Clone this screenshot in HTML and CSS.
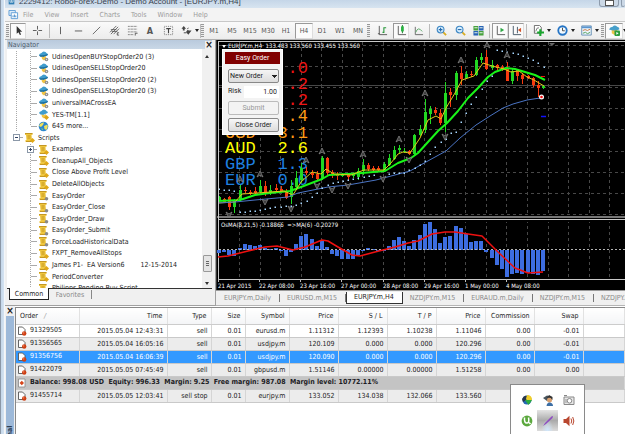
FILE: index.html
```html
<!DOCTYPE html>
<html lang="en">
<head>
<meta charset="utf-8">
<title>RoboForex-Demo - EURJPY.m,H4</title>
<link rel="stylesheet" href="styles.css">
</head>
<body>
<svg class="defs" aria-hidden="true">
  <symbol id="ea" viewBox="0 0 11 11"><path d="M1 4Q1.500 2.500 3.500 2Q5-.5 7.500 1L9 2.500Q10.500 3 9.500 4L5 6Q2 6 1 4Z" fill="#3f9ccd"/><path d="M1 4Q5 5 9.500 3L10 4Q6 7 2 5.500Z" fill="#1d6f9f"/><path d="M3.500 5.500Q6 6.500 8 5V8L6 9.500L4 8Z" fill="#f1c445"/><circle cx="8.500" cy="8.500" r="1.800" fill="#8c8c8c"/><circle cx="8.500" cy="8.500" r=".7" fill="#ddd"/></symbol>
  <symbol id="ea2" viewBox="0 0 11 11"><path d="M1 4Q1.500 2.500 3.500 2Q5-.5 7.500 1L9 2.500Q10.500 3 9.500 4L5 6Q2 6 1 4Z" fill="#3f9ccd"/><path d="M3.500 5.500Q6 6.500 8 5V8L6 9.500L4 8Z" fill="#f1c445"/><path d="M8.500 6L11 8.500L8.500 11L6 8.500Z" fill="#dca416"/></symbol>
  <symbol id="globe" viewBox="0 0 11 11"><circle cx="5.500" cy="5.500" r="4.800" fill="#2a86d1"/><path d="M2 3Q4 1 6 1.500L5 4L3 6L1 5ZM6 5L9.500 3.500Q10.500 6 8.500 9L6.500 8Z" fill="#f0e05a"/><path d="M3 7L5 8L4.500 9.500Z" fill="#8bd06b"/></symbol>
  <symbol id="script" viewBox="0 0 11 11"><path d="M1 1H8.500V3H7.500L8 8H9V10H1.500V8H2.500L2 3H1Z" fill="#efc63f"/><path d="M1 1.500H8.500M2 9.500H8M3.500 4H6.500M3.500 6H6.500" stroke="#b98c1c" stroke-width=".8"/><circle cx="8.500" cy="8.700" r="1.800" fill="#8a8a8a"/></symbol>
  <symbol id="script2" viewBox="0 0 11 11"><path d="M1 1H8.500V3H7.500L8 8H9V10H1.500V8H2.500L2 3H1Z" fill="#efc63f"/><path d="M1 1.500H8.500M2 9.500H8M3.500 4H6.500M3.500 6H6.500" stroke="#b98c1c" stroke-width=".8"/><path d="M8.500 6L11 8.500L8.500 11L6 8.500Z" fill="#e0a818"/></symbol>
  <symbol id="order" viewBox="0 0 10 10"><path d="M1.500 1H5.500L8 3.500V8.500H1.500Z" fill="#fff" stroke="#555" stroke-width=".9"/><circle cx="7.200" cy="7.500" r="2.200" fill="#cf3d12"/><circle cx="6.700" cy="6.900" r=".7" fill="#f59a70"/></symbol>
  <symbol id="balance" viewBox="0 0 10 10"><path d="M1.500 1H8V9H1.500Z" fill="#fff" stroke="#888" stroke-width=".8"/><path d="M4.800 2.800L7 5L4.800 7.200L2.600 5Z" fill="#d6451a"/></symbol>
</svg>

<header class="titlebar">
  <svg class="app-icon" viewBox="0 0 9 8"><path d="M0 0H9V7H0Z" fill="#2f7eb5"/><path d="M2 0V3.500H7V0M4.500 0V3" stroke="#fff" fill="none"/></svg>
  <span class="title">2229412: RoboForex-Demo - Demo Account - [EURJPY.m,H4]</span>
  <button class="winbtn" aria-label="Minimize"></button><button class="winbtn last" aria-label="Maximize"></button>
</header>

<nav class="menu">
  <svg class="menu-icon" viewBox="0 0 11 11"><path d="M.5.5H7.500V6H.5Z" fill="#dcecf9" stroke="#5b9bd5"/><path d="M3 3H10V9.500H3Z" fill="#fff" stroke="#5b9bd5"/><path d="M5 8V6M6.500 8V5M8 8V6" stroke="#3d85c6"/></svg>
  <a href="#">File</a><a href="#">View</a><a href="#">Insert</a><a href="#">Charts</a><a href="#">Tools</a><a href="#">Window</a><a href="#">Help</a>
</nav>

<div class="toolbar">
  <i class="grip"></i>
  <button class="on w16" aria-label="Cursor"><svg viewBox="0 0 12 12"><path d="M4 1V9.500L6 8L7.500 11L8.800 10.400L7.500 7.400H10Z" fill="#333"/></svg></button>
  <button class="w22" aria-label="Crosshair"><svg viewBox="0 0 12 12"><path d="M6 1V5M6 7V11M1 6H5M7 6H11" stroke="#555"/></svg></button>
  <i class="sep"></i>
  <button class="w18" aria-label="Vertical line"><svg viewBox="0 0 12 12"><path d="M6 2V10" stroke="#555"/></svg></button>
  <button class="w18" aria-label="Horizontal line"><svg viewBox="0 0 12 12"><path d="M2 6.500H10" stroke="#555"/></svg></button>
  <button class="w18" aria-label="Trendline"><svg viewBox="0 0 12 12"><path d="M2 10L10 2" stroke="#666"/></svg></button>
  <button class="w18" aria-label="Channel"><svg viewBox="0 0 12 12"><path d="M1 8L8 1M2 10L10 2M5 10L11 4M2 5H8M3 7H9" stroke="#555" stroke-width=".9"/><path d="M11 8.500H9V11H11" stroke="#333" fill="none" stroke-width=".8"/></svg></button>
  <button class="w18" aria-label="Fibonacci"><svg viewBox="0 0 12 12"><path d="M1 1.500H11M1 4.500H11M1 7.500H11M1 10.500H7" stroke="#666" stroke-dasharray="1 .6"/><path d="M9 11.500V9H11.500" stroke="#333" fill="none" stroke-width=".8"/></svg></button>
  <button class="w18 glyph">A</button>
  <button class="w18" aria-label="Text label"><svg viewBox="0 0 12 12"><path d="M1.500 1.500H10.500V10.500H1.500Z" fill="none" stroke="#777" stroke-dasharray="1 1"/><path d="M3.500 4H8.500M6 4V9" stroke="#444" stroke-width="1.200"/></svg></button>
  <button class="w18" aria-label="Arrows"><svg viewBox="0 0 12 12"><path d="M3 1L5.500 4H4V6H2V4H.5ZM8 10.500L5.500 7.500L7 5.500L9 6H11.500Z" fill="#444"/><path d="M3 8.500H6M7 4.500L8 3" stroke="#444"/></svg></button>
  <i class="caret near"></i>
  <i class="sep flush"></i><i class="grip"></i>
  <button class="w18">M1</button><button class="w18">M5</button><button class="w18">M15</button><button class="w18">M30</button><button class="w18">H1</button><button class="w18 on">H4</button><button class="w18">D1</button><button class="w18">W1</button><button class="w18">MN</button>
  <i class="grip"></i>
  <button class="w22" aria-label="Bar chart"><svg viewBox="0 0 12 12"><path d="M2.500 1V10.500H11M1 9.500H3" stroke="#555" fill="none"/><path d="M6 8H7.500V3H10" stroke="#29983b" fill="none" stroke-width="1.200"/></svg></button>
  <button class="w16 on" aria-label="Candlesticks"><svg viewBox="0 0 12 12"><path d="M2.500 1V10.500H11" stroke="#555" fill="none"/><path d="M7 0V9" stroke="#18772a"/><path d="M5.500 1.500H8.500V7H5.500Z" fill="#27b23f"/></svg></button>
  <button class="w18" aria-label="Line chart"><svg viewBox="0 0 12 12"><path d="M2.500 2V10.500H11" stroke="#666" fill="none"/><path d="M3 8Q5.500 1 10 7" stroke="#58a866" fill="none"/></svg></button>
  <i class="sep wide"></i>
  <button class="w19" aria-label="Zoom in"><svg viewBox="0 0 12 12"><path d="M7.500 7.500L11 11" stroke="#d8ac22" stroke-width="2"/><circle cx="5" cy="5" r="3.700" fill="#d7efff" stroke="#3e87c4" stroke-width="1.200"/><path d="M3 5H7M5 3V7" stroke="#2869a8" stroke-width="1.200"/></svg></button>
  <button class="w18" aria-label="Zoom out"><svg viewBox="0 0 12 12"><path d="M7.500 7.500L11 11" stroke="#d8ac22" stroke-width="2"/><circle cx="5" cy="5" r="3.700" fill="#d7efff" stroke="#3e87c4" stroke-width="1.200"/><path d="M3 5H7" stroke="#2869a8" stroke-width="1.200"/></svg></button>
  <button class="w18" aria-label="Tile windows"><svg viewBox="0 0 12 12"><path d="M.5 1H5.700V6H.5ZM6.300 6.500H11.500V11.500H6.300Z" fill="#47a03c"/><path d="M6.300 1H11.500V6H6.300ZM.5 6.500H5.700V11.500H.5Z" fill="#2763b5"/><path d="M1.500 3H5M7 3H10.500M1.500 8.500H5M7 8.500H10.500" stroke="#e4f2e8" stroke-width="1.200"/></svg></button>
  <i class="sep wide"></i>
  <button class="w16 on" aria-label="Auto scroll"><svg viewBox="0 0 12 12"><path d="M2.500 1V10.500H11" stroke="#555" fill="none"/><path d="M6 3L10 5.500L6 8Z" fill="#2ea744"/></svg></button>
  <button class="w16 on" aria-label="Chart shift"><svg viewBox="0 0 12 12"><path d="M2.500 1V10.500H11M7 2V9" stroke="#456" fill="none"/><path d="M11 3L7.500 5.500L11 8Z" fill="#d3532a"/></svg></button>
  <i class="sep wide"></i>
  <button class="w18" aria-label="Indicators"><svg viewBox="0 0 12 12"><path d="M1.500.5H7L9 2.500V9H1.500Z" fill="#fff" stroke="#666"/><path d="M3 7Q4 2 6.500 3" stroke="#777" fill="none"/><path d="M8 4.500V12M4.500 8.200H12" stroke="#18a52e" stroke-width="2.300"/></svg></button><i class="caret"></i>
  <button class="w18" aria-label="Periods"><svg viewBox="0 0 12 12"><circle cx="6" cy="6" r="4.600" fill="#f3faff" stroke="#2474c5" stroke-width="2"/><path d="M6 3V6.300H8.500" stroke="#444" fill="none"/></svg></button><i class="caret"></i>
  <button class="w18" aria-label="Templates"><svg viewBox="0 0 12 12"><path d="M.8 1H11.200V11H.8Z" fill="#edf5fc" stroke="#668eb5"/><path d="M1 2.500H11" stroke="#5b95cf" stroke-width="2"/><path d="M2 6L4.500 5L7 6L10 4.500" stroke="#c67742" fill="none"/><path d="M2 9L5 8L7 9.500L10 8" stroke="#4b9c55" fill="none"/></svg></button><i class="caret"></i>
  <i class="grip"></i>
  <button class="w18 on" aria-label="Expert advisors"><svg viewBox="0 0 12 12"><path d="M3 4H9V9L6 11L3 9Z" fill="#efc64a"/><path d="M0 5Q1 2 4 2Q6-1 9 2Q12 3 11 5Q6 7 0 5Z" fill="#469fca"/><rect x="6" y="6" width="6" height="6" rx="1" fill="#2b9e3d"/><path d="M8 7.500V10.500L10.500 9Z" fill="#fff"/></svg></button><i class="caret"></i>
</div>

<main class="work">
  <section class="navigator">
    <div class="nav-head"><span>Navigator</span><button class="close" aria-label="Close navigator">×</button></div>
    <div class="nav-body">
      <ul class="tree">
        <li class="ea"><svg><use href="#ea"/></svg>UdinesOpenBUYStopOrder20 (3)</li>
        <li class="ea"><svg><use href="#ea"/></svg>UdinesOpenSELLStopOrder20</li>
        <li class="ea"><svg><use href="#ea"/></svg>UdinesOpenSELLStopOrder20 (2)</li>
        <li class="ea"><svg><use href="#ea"/></svg>UdinesOpenSELLStopOrder20 (3)</li>
        <li class="ea"><svg><use href="#ea"/></svg>universalMACrossEA</li>
        <li class="ea"><svg><use href="#ea2"/></svg>YES-TM[1.1]</li>
        <li class="ea end"><svg><use href="#globe"/></svg>645 more...</li>
        <li class="root"><b class="box"></b><svg><use href="#script2"/></svg>Scripts</li>
        <li><b class="box plus"></b><svg><use href="#script2"/></svg>Examples</li>
        <li><svg><use href="#script2"/></svg>CleanupAll_Objects</li>
        <li><svg><use href="#script2"/></svg>Close Above Profit Level</li>
        <li><svg><use href="#script2"/></svg>DeleteAllObjects</li>
        <li><svg><use href="#script"/></svg>EasyOrder</li>
        <li><svg><use href="#script"/></svg>EasyOrder_Close</li>
        <li><svg><use href="#script"/></svg>EasyOrder_Draw</li>
        <li><svg><use href="#script"/></svg>EasyOrder_Submit</li>
        <li><svg><use href="#script"/></svg>ForceLoadHistoricalData</li>
        <li><svg><use href="#script2"/></svg>FXPT_RemoveAllStops</li>
        <li><svg><use href="#script2"/></svg>James P1-&nbsp; EA Version6<span class="date">12-15-2014</span></li>
        <li><svg><use href="#script2"/></svg>PeriodConverter</li>
        <li><svg><use href="#script2"/></svg>Philipps Pending Buy Script</li>
      </ul>
      <div class="scroll"><i class="up"></i><i class="thumb"></i><i class="down"></i></div>
    </div>
    <div class="nav-tabs"><button class="active">Common</button><button>Favorites</button></div>
  </section>

  <section class="charts">
    <div class="chart">
      <svg id="plot" class="plot"></svg>
      <form class="easy">
        <h2>Easy Order</h2>
        <select aria-label="Order type"><option>New Order</option></select>
        <div class="risk"><label for="risk">Risk</label><input id="risk" value="1.00"></div>
        <button type="button" disabled>Submit</button>
        <button type="button">Close Order</button>
      </form>
    </div>
    <div class="chart-tabs"><button>EURJPY.m,Daily</button><button>EURUSD.m,M15</button><button class="active">EURJPY.m,H4</button><button>NZDJPY.m,M15</button><button>EURAUD.m,Daily</button><button>NZDJPY.m,M15</button><button>NZDJPY.m,H4</button></div>
  </section>
</main>

<section class="terminal">
  <div class="side"><button class="close" aria-label="Close terminal">×</button><span>Terminal</span></div>
  <div class="orders">
    <table>
      <colgroup><col class="c64"><col class="c88"><col class="c44"><col class="c34"><col class="c44"><col class="c49"><col class="c49"><col class="c49"><col class="c49"><col class="c49"><col class="c49"><col></colgroup>
      <thead><tr><th>Order <i class="sort">/</i></th><th>Time</th><th>Type</th><th>Size</th><th>Symbol</th><th>Price</th><th>S / L</th><th>T / P</th><th>Price</th><th>Commission</th><th>Swap</th><th></th></tr></thead>
      <tbody>
        <tr><td><svg><use href="#order"/></svg>91329505</td><td>2015.05.04 12:43:31</td><td>sell</td><td>0.01</td><td>eurusd.m</td><td>1.11312</td><td>1.12393</td><td>1.10238</td><td>1.11046</td><td>0.00</td><td>-0.01</td><td></td></tr>
        <tr class="alt"><td><svg><use href="#order"/></svg>91356565</td><td>2015.05.04 16:05:16</td><td>sell</td><td>0.01</td><td>usdjpy.m</td><td>120.109</td><td>0.000</td><td>0.000</td><td>120.296</td><td>0.00</td><td>-0.01</td><td></td></tr>
        <tr class="sel"><td><svg><use href="#order"/></svg>91356756</td><td>2015.05.04 16:06:39</td><td>sell</td><td>0.01</td><td>usdjpy.m</td><td>120.090</td><td>0.000</td><td>0.000</td><td>120.296</td><td>0.00</td><td>-0.01</td><td></td></tr>
        <tr class="alt"><td><svg><use href="#order"/></svg>91422079</td><td>2015.05.05 07:45:49</td><td>sell</td><td>0.01</td><td>gbpusd.m</td><td>1.51146</td><td>0.00000</td><td>0.00000</td><td>1.51258</td><td>0.00</td><td>0.00</td><td></td></tr>
        <tr class="sum"><td colspan="12"><svg><use href="#balance"/></svg>Balance: 998.08 USD&nbsp; Equity: 996.33&nbsp; Margin: 9.25&nbsp; Free margin: 987.08&nbsp; Margin level: 10772.11%</td></tr>
        <tr class="alt"><td><svg><use href="#order"/></svg>91455714</td><td>2015.05.05 12:03:41</td><td>sell stop</td><td>0.01</td><td>eurjpy.m</td><td>133.052</td><td>134.038</td><td>132.066</td><td>133.560</td><td></td><td></td><td></td></tr>
      </tbody>
    </table>
  </div>
</section>

<aside class="tray">
  <button aria-label="Download manager"><svg viewBox="0 0 12 12"><circle cx="6" cy="6" r="4.500" fill="#2468b4"/><path d="M1 5Q3 1 6 2L5 6L2 8Z" fill="#28364a"/><path d="M6 1Q11 1 11 6L7 7L5 5Z" fill="#f0cf2b"/><path d="M4 6H11L7.500 11Z" fill="#2dac3d"/></svg></button>
  <button aria-label="Agent"><svg viewBox="0 0 12 12"><path d="M1 4L5 1.500L10 3V6L5 7Z" fill="#48545c"/><circle cx="7.500" cy="6" r="2.500" fill="#d9a06f"/><path d="M4.500 12Q5 8 8 8.500Q11 9 11 12Z" fill="#3d6fa5"/><path d="M4.500 4.500Q8 2 10.500 6V3L7 1Z" fill="#333"/></svg></button>
  <button aria-label="Capture"><svg viewBox="0 0 12 12"><path d="M1 3H11V10.500H1Z" fill="#e8e8e8" stroke="#888"/><path d="M1 1.500H4" stroke="#888"/><circle cx="6.500" cy="6.800" r="2.300" fill="#fff" stroke="#888"/><path d="M3 5V9" stroke="#999"/></svg></button>
  <button aria-label="Torrent"><svg viewBox="0 0 12 12"><circle cx="6" cy="6" r="5.400" fill="#5ba83e"/><path d="M3.500 2.500Q3 8.500 6.200 8Q8.500 7.500 7.500 2.500M8 7.500L9.500 9" stroke="#fff" fill="none" stroke-width="1.500"/></svg></button>
  <button class="hot" aria-label="Pen"><svg viewBox="0 0 12 12"><path d="M1 11L3 8L9.500 1.500L11 1L10.500 3L4 9Z" fill="#8e4cc0"/></svg></button>
  <button aria-label="Volume"><svg viewBox="0 0 12 12"><path d="M.5 4H3L6.500.8V11.200L3 8H.5Z" fill="#b9472f"/><path d="M8 3.500Q9.500 6 8 8.500M9.700 2Q12 6 9.700 10" stroke="#b9472f" fill="none"/></svg></button>
</aside>
<script src="chart.js"></script>
</body>
</html>
```
FILE: styles.css
```css
* { box-sizing: border-box; }
body {
  margin: 0; height: 100vh; overflow: hidden; position: relative;
  display: flex; flex-direction: column;
  padding-left: 5px;
  font: 7px/10px "DejaVu Sans Condensed", "DejaVu Sans", sans-serif;
  color: #1c1c24; background: #f0f0f0;
}
body::before {
  content: ""; position: absolute; left: 0; top: 0; bottom: 0; width: 5px;
  background: linear-gradient(90deg, #8b97a6 1px, #c4d7ea 1px, #d5e3f1 4px, #f4f7fa 4px);
}
button, input, select { font: inherit; color: inherit; margin: 0; padding: 0; border: 0; background: none; border-radius: 0; }
svg { display: block; flex: none; }
.defs { position: absolute; width: 0; height: 0; }
.close { font-size: 10px; font-weight: bold; line-height: 8px; color: #222; }

.titlebar { display: flex; height: 8px; flex: none; padding-left: 2px; gap: 3px; background: linear-gradient(#c5d6e8, #d7e4f0); }
.app-icon { width: 9px; height: 5px; }
.title { flex: 1; font: 8px/10px "Liberation Sans", sans-serif; margin-top: -3px; white-space: nowrap; color: #39424e; }
.winbtn { width: 20px; height: 7px; border: 1px solid #8e9cad; border-top: 0; border-radius: 0 0 3px 3px; display: flex; justify-content: center; background: #cbd8e6; }
.winbtn::after { content: ""; width: 7px; height: 4px; border: 1px solid #555; background: #fff; }
.winbtn.last { width: 4px; margin-left: -1px; overflow: hidden; border-right: 0; }
.winbtn.last::after { display: none; }

.menu { display: flex; flex: none; align-items: center; height: 14px; padding-left: 3px; gap: 11px; background: #f3f3f3; border-bottom: 1px solid #c8c8c8; }
.menu-icon { width: 11px; height: 10px; margin-right: -7px; }
.menu a { color: #9b9b9b; text-decoration: none; font-size: 7px; }

.toolbar { display: flex; flex: none; align-items: center; height: 18px; padding: 1px 0 1px 1px; background: linear-gradient(#fafafa, #ececec); border-bottom: 1px solid #b0b0b0; overflow: hidden; white-space: nowrap; color: #555; }
.toolbar button { height: 16px; flex: none; display: flex; align-items: center; justify-content: center; border: 1px solid transparent; }
.toolbar svg { width: 11px; height: 11px; }
.toolbar .on { background: #fbfbfb; border-color: #999 #ddd #ddd #999; }
.toolbar .glyph { font-size: 9px; font-weight: bold; }
.w16 { width: 16px; } .w18 { width: 18px; } .w19 { width: 19px; } .w22 { width: 22px; }
.grip { flex: none; width: 3px; height: 13px; margin-right: 1px; background: repeating-linear-gradient(#999 0 1px, #eee 1px 2px); }
.sep { flex: none; width: 1px; height: 14px; margin: 0 1px; background: #bbb; }
.sep.flush { margin: 0; }
.sep.wide { margin: 0 2px; }
.caret { flex: none; width: 4px; margin-right: 2px; border: 2px solid transparent; border-top: 3px solid #222; border-bottom: 0; }
.caret.near { margin-right: 1px; }

.work { display: flex; flex: none; height: 266px; }
.navigator { width: 211px; flex: none; display: flex; flex-direction: column; padding: 0 3px 3px 2px; border-right: 1px solid #a0a0a0; border-bottom: 1px solid #a0a0a0; background: #f0f0f0; }
.nav-head { display: flex; justify-content: space-between; align-items: center; height: 9px; flex: none; padding: 0 1px; color: #4c5a6c; background: linear-gradient(#b9cadd, #c9d7e6); }
.nav-head .close { background: #f0f0f0; margin-right: -2px; width: 8px; }
.nav-body { display: flex; height: 240px; overflow: hidden; background: #fff; border-bottom: 1px solid #333; }
.tree { flex: 1; margin: 2px 0 0; padding: 0; list-style: none; height: 243px; display: grid; grid-auto-rows: 1fr; }
.tree li { position: relative; display: flex; align-items: center; gap: 3px; padding-left: 31px; white-space: pre;
  background: repeating-linear-gradient(#aaa 0 1px, transparent 1px 2px) 23px 0 / 1px 100% no-repeat, linear-gradient(#aaa, #aaa) 24px 50% / 6px 1px no-repeat; }
.tree li.ea { background: repeating-linear-gradient(#aaa 0 1px, transparent 1px 2px) 23px 0 / 1px 100% no-repeat, linear-gradient(#aaa, #aaa) 24px 50% / 6px 1px no-repeat, repeating-linear-gradient(#aaa 0 1px, transparent 1px 2px) 9px 0 / 1px 100% no-repeat; }
.tree li.end { background-size: 1px 50%, 6px 1px, 1px 100%; }
.tree li.root { padding-left: 17px; background: linear-gradient(#aaa, #aaa) 10px 50% / 6px 1px no-repeat; }
.tree svg { width: 11px; height: 11px; }
.date { margin-left: 13px; }
.box { position: absolute; left: 20px; width: 7px; height: 7px; border: 1px solid #8b98a8; background: linear-gradient(#346, #346) 1px 2px / 3px 1px no-repeat #fff; }
.root .box { left: 6px; }
.box.plus { background: linear-gradient(#346, #346) 1px 2px / 3px 1px no-repeat, linear-gradient(#346, #346) 2px 1px / 1px 3px no-repeat #fff; }
.scroll { width: 10px; flex: none; display: flex; flex-direction: column; align-items: center; background: #f0f0f0; padding: 6px 0 3px; }
.scroll .up { border: 2px solid transparent; border-bottom: 3px solid #333; border-top: 0; }
.scroll .down { border: 2px solid transparent; border-top: 3px solid #333; border-bottom: 0; }
.scroll .thumb { width: 9px; height: 17px; margin: auto 0 10px; border: 1px solid #999; border-radius: 1px; background: linear-gradient(#666, #666) 2px 5px / 3px 1px no-repeat, linear-gradient(#666, #666) 2px 7px / 3px 1px no-repeat, linear-gradient(#666, #666) 2px 9px / 3px 1px no-repeat #e4e4e4; }
.nav-tabs { display: flex; height: 12px; padding-left: 2px; margin-top: -1px; position: relative; }
.nav-tabs button { width: 43px; border-right: 1px solid #888; color: #888; height: 9px; margin-top: 2px; }
.nav-tabs .active { width: 40px; height: 12px; margin-top: 0; background: #fff; border: 1px solid #222; border-top: 0; color: #222; }

.charts { flex: 1; min-width: 0; display: flex; flex-direction: column; }
.chart { position: relative; height: 250px; border-left: 1px solid #333; background: #000; }
.plot { width: 100%; height: 100%; font: 6px "DejaVu Sans Condensed", sans-serif; }
.plot .fx { font: 17px "Liberation Mono", monospace; }
.easy { position: absolute; left: 5px; top: 9px; width: 61px; padding: 2px; display: flex; flex-direction: column; gap: 3px; background: #f3f3f3; border: 1px solid #fff; font: 7px/10px Roboto, sans-serif; }
.easy h2 { margin: 0 0 2px; background: #800000; color: #fff; font: inherit; line-height: 12px; text-align: center; }
.easy select, .easy button { width: 51px; height: 14px; margin-left: 3px; border: 1px solid #888; border-radius: 2px; background: linear-gradient(#f7f7f7, #dcdcdc); text-align: center; white-space: nowrap; }
.easy select { appearance: none; text-align: left; padding-left: 1px; background: conic-gradient(from -45deg at 50% 100%, #222 90deg, transparent 0) 43px 5px / 5px 3px no-repeat, linear-gradient(#f5f5f5, #dcdcdc); background: linear-gradient(#222, #222) 43px 5px / 5px 1px no-repeat, linear-gradient(#222, #222) 44px 6px / 3px 1px no-repeat, linear-gradient(#222, #222) 45px 7px / 1px 1px no-repeat, linear-gradient(#f5f5f5, #dcdcdc); }
.easy button:disabled { color: #999; border-color: #bbb; background: #f3f3f3; }
.risk { display: flex; justify-content: space-between; padding: 0 1px 0 3px; height: 12px; }
.risk input { width: 35px; background: #fff; text-align: right; padding-right: 2px; }
.chart-tabs { flex: none; display: flex; align-items: center; overflow: hidden; height: 16px; padding: 1px 0 2px 1px; color: #8a8a8a; border-top: 1px solid #999; border-bottom: 1px solid #b5b5b5; }
.chart-tabs button { flex: none; height: 8px; padding: 0 8px 0 7px; line-height: 8px; border-right: 1px solid #777; }
.chart-tabs .active { height: 12px; border: 1px solid #333; border-top: 0; background: #fff; color: #222; }

.terminal { flex: 1; min-height: 0; overflow: hidden; display: flex; background: #fff; }
.side { width: 10px; flex: none; display: flex; flex-direction: column; align-items: center; background: #f0f0f0; }
.side .close { height: 10px; flex: none; }
.side span { flex: 1; min-height: 0; overflow: hidden; width: 8px; background: #9db9d9; writing-mode: vertical-rl; transform: rotate(180deg); line-height: 8px; text-indent: -22px; font-weight: bold; color: #27384e; }
.orders { flex: 1; min-width: 0; border-left: 1px solid #888; border-top: 1px solid #888; margin-top: 1px; }
table { width: 100%; table-layout: fixed; border-collapse: collapse; }
.c64 { width: 63px; } .c88 { width: 88px; } .c44 { width: 44px; } .c34 { width: 34px; } .c49 { width: 49px; }
th { height: 16px; padding: 0 4px 0 0; font-weight: normal; text-align: right; white-space: nowrap; border-right: 1px solid #e2e2e2; border-bottom: 1px solid #ccc; background: linear-gradient(#fff, #f4f5f7); }
th:first-child { text-align: left; padding-left: 4px; }
.sort { color: #999; margin-left: 4px; }
td { height: 13px; padding: 0 3px 0 0; text-align: right; white-space: nowrap; border-right: 1px solid #d5d5d5; border-bottom: 1px solid #c9c9c9; }
td:first-child { text-align: left; padding-left: 1px; }
td svg { display: inline-block; width: 10px; height: 10px; vertical-align: middle; margin-right: 3px; }
.alt td { background: #ececec; }
.sel td { background: #3399ff; color: #fff; }
.sum td { background: #c4c4c4; font-weight: bold; }

.tray { position: absolute; left: 510px; bottom: 0; width: 75px; height: 50px; padding: 4px 5px 0; display: grid; grid-template-columns: repeat(3, 21px); grid-auto-rows: 21px; background: #fff; border: 1px solid #8a8a8a; border-bottom: 0; }
.tray button { display: flex; align-items: center; justify-content: center; }
.tray svg { width: 12px; height: 12px; }
.tray .hot { background: radial-gradient(ellipse at 50% 100%, #cfe6fb, transparent 40%), linear-gradient(#e4e4e4, #aaa 50%, #dcdcdc); }
```
FILE: chart.js
```js
// Bars are drawn left to right at a fixed pitch; values are y positions on the plot.
const X0 = 2, STEP = 5.143;
const svg = document.getElementById('plot');
let out = '';
const x = i => X0 + i * STEP;
const line = (pts, color, w) => {
  out += `<polyline points="${pts}" fill="none" stroke="${color}" stroke-width="${w}" stroke-linejoin="round"/>`;
};

// grid
for (let i = 0; i < 40; i++) {
  const gx = Math.round(22 + i * 20.57) + .5;
  out += `<path d="M${gx} 2V176M${gx} 180V239" stroke="#484848" stroke-dasharray="3 3"/>`;
}
for (let i = 0; i < 9; i++) {
  out += `<path d="M2 ${Math.round(5 + i * 21.1) + .5}H2000" stroke="#484848" stroke-dasharray="3 3"/>`;
}
out += '<path d="M2 45.500H2000" stroke="#484848"/><path d="M332 3H338L335 6Z" fill="#666"/>';

// currency strength
[['', '.0', '#f01414', 33], ['', '.2', '#f01414', 49], ['', '.2', '#f01414', 65], ['', '.4', '#ff9a14', 81],
 ['USD', '3.1', '#ff9a14', 98], ['AUD', '2.6', '#ffff00', 113], ['GBP', '1.3', '#1e80e0', 129], ['EUR', '0.0', '#1e80e0', 145]]
.forEach(([n, v, c, y]) => {
  if (n) out += `<text class="fx" x="8" y="${y}" fill="${c}">${n}</text>`;
  out += `<text class="fx" x="91" y="${y}" fill="${c}" text-anchor="end">${v}</text>`;
});

// candles: high, low, top, bottom, direction
const bars = [
[196,202,197,201,1],[198,203,199,202,0],[196,210,197,207,0],[199,213,201,207,1],[185,201,190,200,1],[187,193,190,191,0],[190,195,192,193,0],[187,195,191,193,0],
[180,193,186,192,1],[181,196,186,193,0],[185,195,190,192,1],[184,192,188,190,0],[186,192,189,191,0],[189,199,191,198,0],[180,204,186,197,1],[171,188,178,187,1],
[163,183,168,180,1],[167,175,171,173,0],[170,178,173,175,0],[171,180,174,179,0],[156,180,158,178,1],[157,176,158,173,0],[170,178,172,175,0],[172,180,174,176,0],
[173,177,174,176,1],[173,180,174,177,0],[173,178,174,176,1],[168,180,171,177,1],[159,175,165,171,1],[163,171,165,169,0],[166,171,168,170,0],[166,172,168,170,0],
[162,172,164,171,1],[154,166,158,165,1],[146,160,150,159,1],[145,153,148,150,1],[148,153,151,152,1],[150,155,151,154,0],[134,155,135,154,1],[125,136,129,135,1],
[99,133,112,130,1],[106,124,109,114,1],[107,115,110,113,0],[109,125,113,123,0],[82,132,93,123,1],[88,107,92,95,0],[71,100,73,95,1],[66,85,73,79,0],
[71,79,74,78,1],[71,77,74,75,0],[57,76,60,75,1],[53,63,57,60,1],[50,70,57,69,0],[60,70,65,68,1],[64,70,65,68,0],[65,71,67,69,0],
[62,81,69,81,0],[69,84,71,81,1],[69,81,70,76,0],[73,84,75,79,0],[75,79,76,78,0],[77,87,78,85,0],[81,97,85,88,0],[85,89,86,88,1]];
bars.forEach(([h, l, t, b, up], i) => {
  const c = up ? '#22d822' : '#f83a10', px = Math.round(x(i));
  out += `<path d="M${px + .5} ${h - 40}V${l - 40}" stroke="${c}"/><rect x="${px - 1}" y="${t - 40}" width="3" height="${b - t}" fill="${c}"/>`;
});

line('1,161 23,160 38,155 53,153 73,151 84,147 105,139 112,135 131,134 145,133 168,131 181,123 194,118 201,113 211,102 221,91 230,83 241,71 251,58 261,48 271,37 278,32 289,28 298,29 308,32 318,35 328,40', '#19f519', 2);
line('1,163 18,162 25,154 40,153 67,151 76,155 84,142 95,132 104,134 109,129 117,134 134,135 147,130 167,130 174,123 181,114 186,112 193,113 203,98 211,80 219,76 224,79 229,68 238,53 245,40 257,36 266,23 275,26 287,29 294,32 302,31 310,37 317,40 327,46', '#e2c81a', 1);
line('1,163 18,162 38,160 71,157 81,153 111,147 131,145 159,140 193,131 209,122 229,111 243,98 259,85 273,76 286,68 296,64 310,60 323,58', '#4a74c4', 1);

const dots = '2,149 7,150 12,150 17,151 23,172 28,172 33,171 38,171 43,170 48,169 53,168 58,167 64,167 69,166 74,166 79,165 84,163 90,161 95,157 100,153 105,148 111,145 116,143 121,142 126,141 131,140 136,139 141,138 147,137 152,136 157,135 172,134 177,133 182,133 187,133 192,130 198,128 203,125 208,121 213,114 218,107 224,102 229,99 234,93 239,92 244,82 249,73 254,64 259,57 265,49 270,41 275,36 280,10 285,11 290,12 296,13 301,14 306,16 311,18 316,20 321,23 327,27';
dots.split(' ').forEach(p => {
  const [a, b] = p.split(',');
  out += `<rect x="${a - .5}" y="${b - .5}" width="1.500" height="1.500" fill="#a8d8ff"/>`;
});

// fractals
const arrow = (ax, ay, s) => {
  out += `<path d="M${ax - 3} ${ay + 3 * s}L${ax} ${ay - 3 * s}L${ax + 3} ${ay + 3 * s}L${ax} ${ay + s}Z" fill="#333" stroke="#858585" stroke-width=".8"/>`;
};
[[23,139],[43,134],[105,111],[89,120],[146,114],[182,99],[208,53],[244,20],[270,5],[290,15]].forEach(p => arrow(...p, 1));
[[48,162],[74,169],[12,175],[100,146],[115,150],[131,146],[166,139],[192,120],[228,97]].forEach(p => arrow(...p, -1));

out += '<path d="M324 36.500H328" stroke="#f01010"/><path d="M324 76.500H329" stroke="#1010ff" stroke-width="1.500"/>' +
  '<circle cx="324.500" cy="57" r="2.500" fill="#fff"/><circle cx="324.500" cy="57" r="1.300" fill="#f01010"/>';

// oscillator
out += '<rect x="0" y="176" width="2000" height="6" fill="#000"/><path d="M0 177H2000" stroke="#777" stroke-width="2"/><path d="M1 179.500H2000M1 239.500H2000M1.500 1.500V239.500M1 1.500H2000" stroke="#c8c8c8" fill="none"/>';
const osma = [3,2,5,6,-2,-6,-5,-4,-5,-2,-1,-2,1,6,2,-6,-14,-16,-11,-4,-9,-3,4,6,9,9,9,5,1,-2,-1,1,1,-4,-10,-13,-9,-4,-10,-15,-26,-28,-21,-7,-13,-14,-24,-22,-16,-8,-9,-9,2,8,15,19,27,24,23,24,23,24,25,21];
osma.forEach((v, i) => {
  out += `<rect x="${Math.round(x(i)) - 2}" y="${v < 0 ? 210 + v : 210}" width="4" height="${Math.abs(v)}" fill="#3d6de0"/>`;
});
out += '<path d="M2 209.500H2000" stroke="#b5b5b5" stroke-dasharray="2 2"/>';
line('1,217 11,216 31,211 48,207 60,206 76,210 88,207 105,200 111,201 121,207 135,215 143,216 158,212 178,207 191,203 201,201 215,194 228,192 238,192 251,194 265,196 281,212 298,228 311,233 326,232', '#ee1010', 1.5);

// captions and time axis
const text = (tx, ty, s) => { out += `<text x="${tx}" y="${ty}" fill="#fff" xml:space="preserve">${s}</text>`; };
out += '<path d="M5 5H9L7 8Z" fill="#fff"/>';
text(11, 8, 'EURJPY.m,H4  133.483 133.560 133.455 133.560');
text(4, 187, 'OsMA(8,21,5) -0.18866  =&gt;MA(6) -0.20279');
['21 Apr 2015', '22 Apr 08:00', '23 Apr 16:00', '27 Apr 00:00', '28 Apr 08:00', '29 Apr 16:00', '1 May 00:00', '4 May 08:00'].forEach((s, i) => {
  const tx = Math.round(1 + i * 41.14);
  out += `<path d="M${tx + .5} 239V242" stroke="#bbb"/>`;
  text(tx, 248, s);
});
svg.innerHTML = out;
```
